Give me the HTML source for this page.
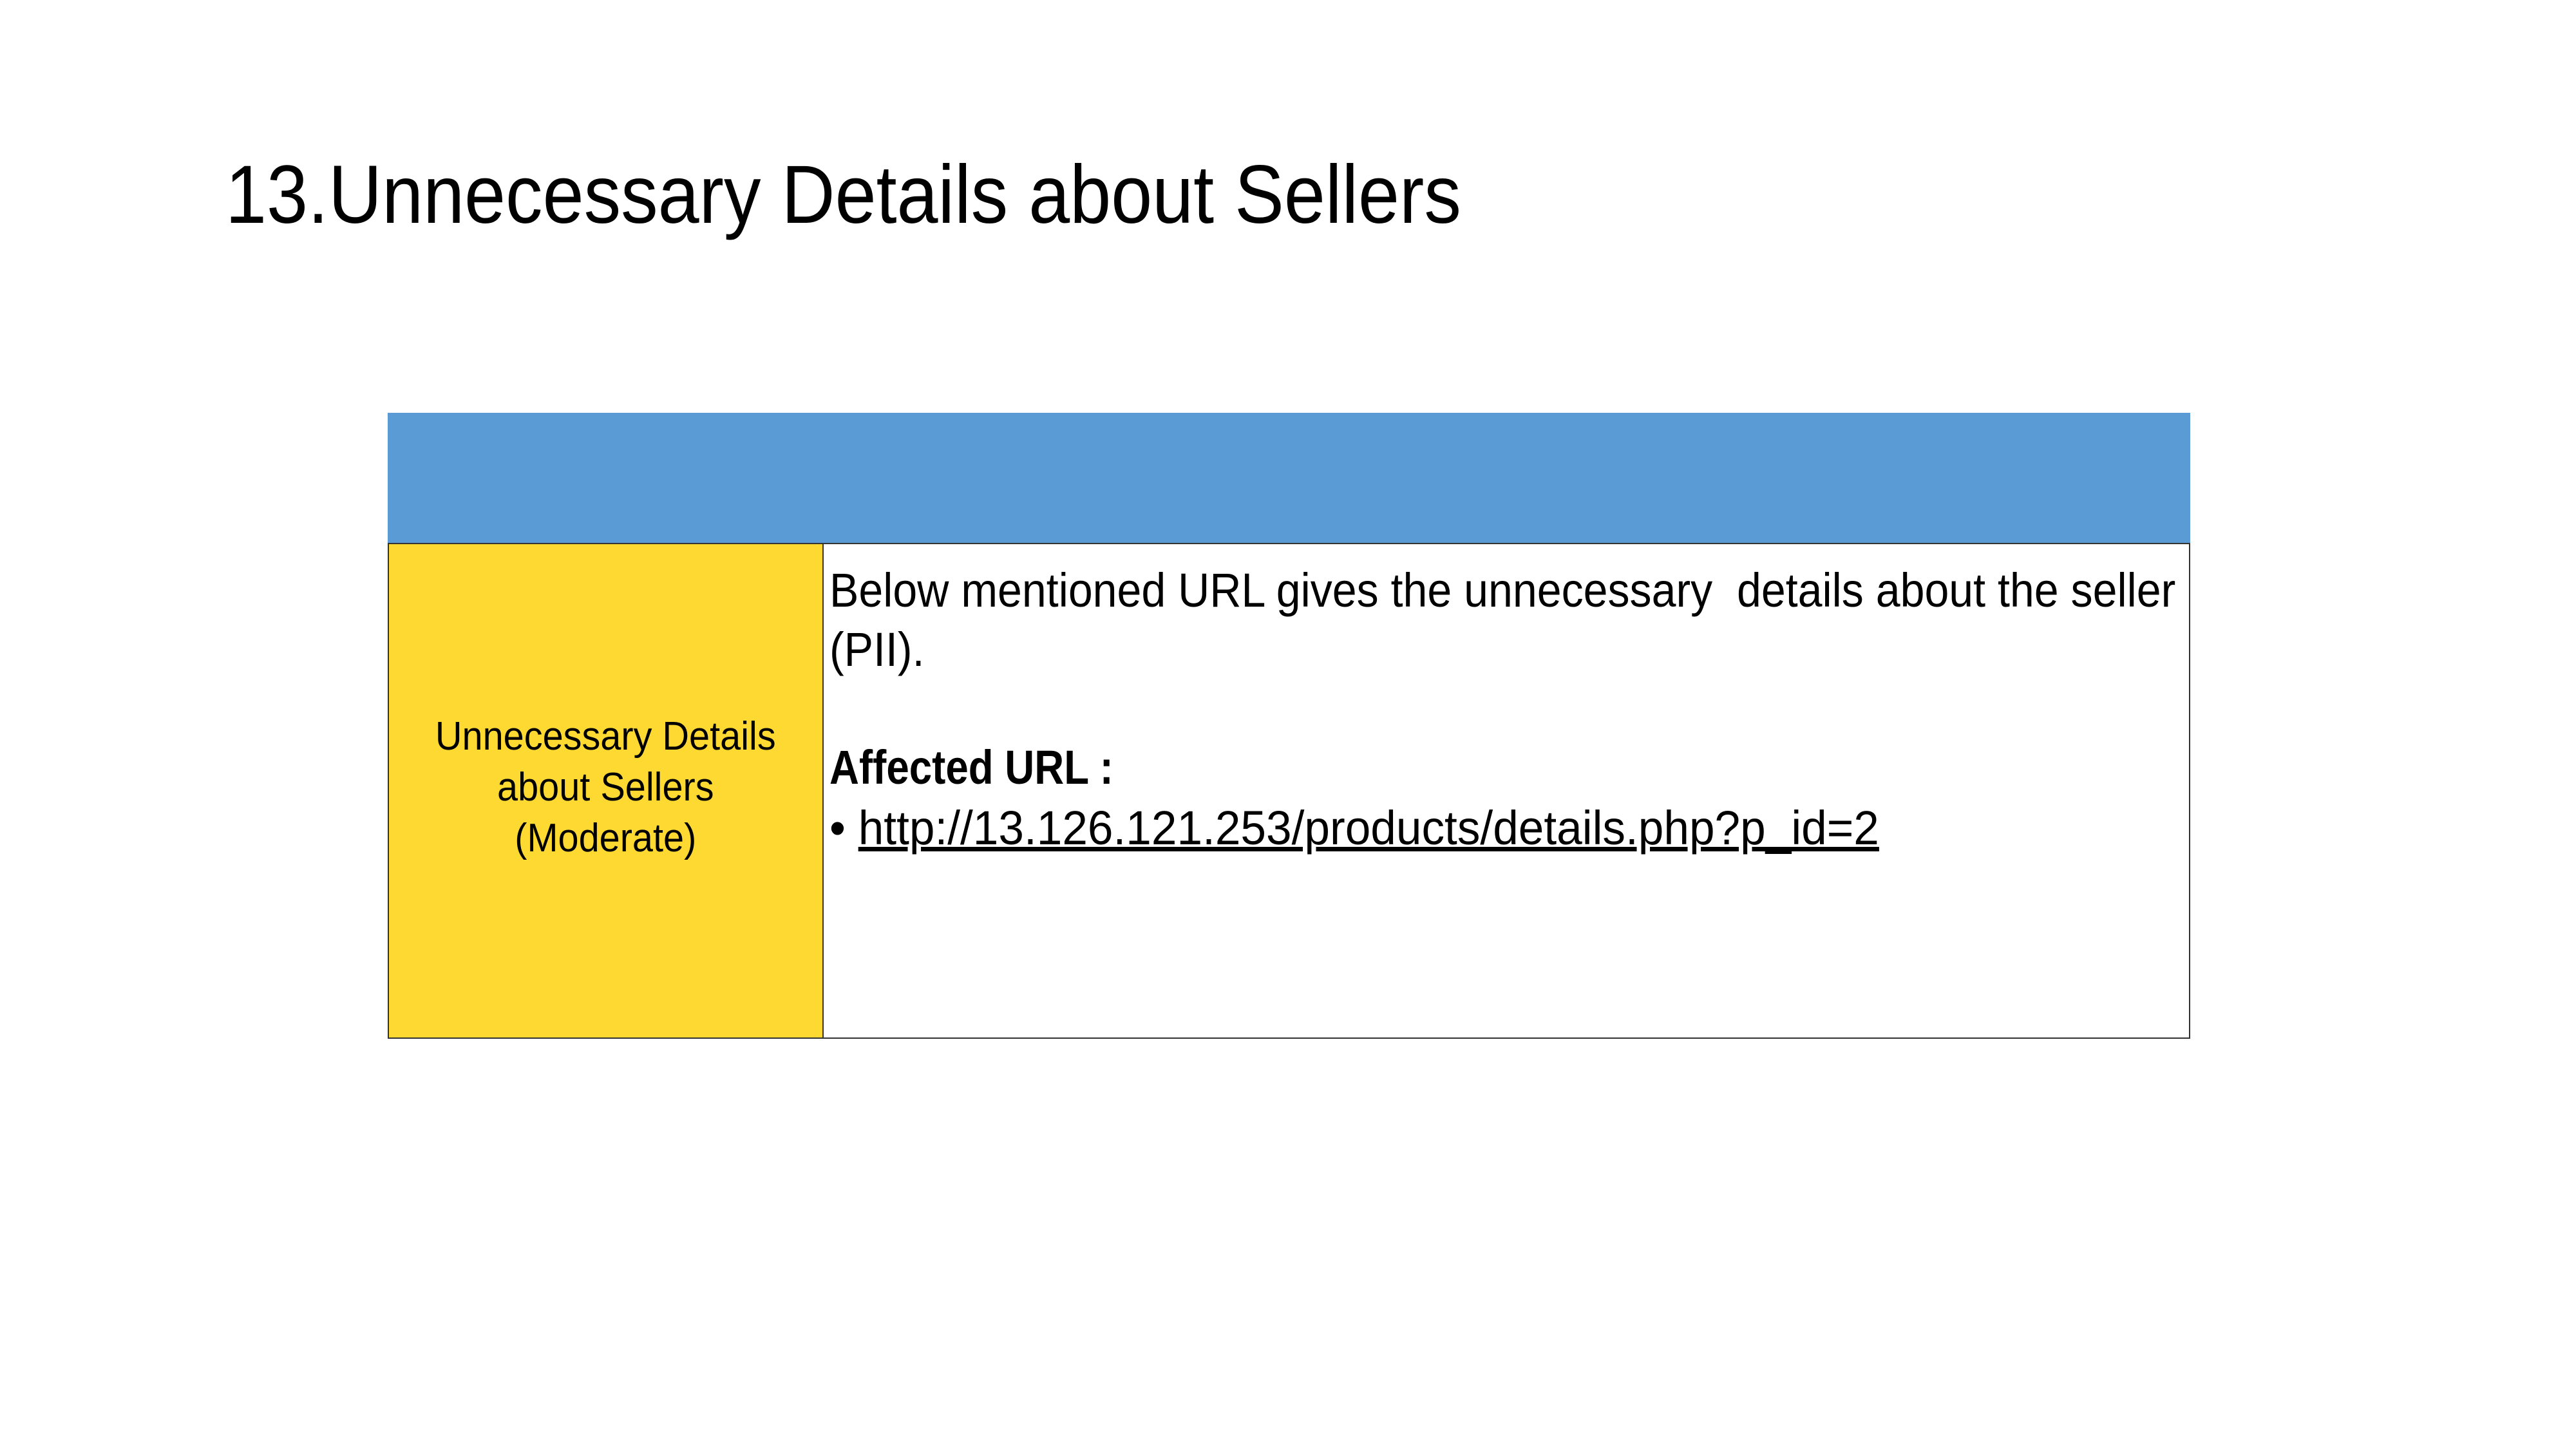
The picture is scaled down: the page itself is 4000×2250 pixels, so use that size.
<!DOCTYPE html>
<html><head><meta charset="utf-8"><style>
html,body{margin:0;padding:0;background:#fff}
body{width:4000px;height:2250px;position:relative;overflow:hidden;font-family:"Liberation Sans",sans-serif;color:#000}
.t{position:absolute;white-space:nowrap;line-height:1;transform-origin:0 0}
</style></head><body>
<div class="t" style="left:350px;top:239px;font-size:128px;transform:scaleX(0.899)">13.Unnecessary Details about Sellers</div>

<div style="position:absolute;left:602px;top:641px;width:2799px;height:203px;background:#5b9bd5"></div>
<div style="position:absolute;left:602px;top:843px;width:677px;height:770px;background:#fed932;border:2px solid #333;box-sizing:border-box"></div>
<div style="position:absolute;left:1277px;top:843px;width:2124px;height:770px;background:#fff;border:2px solid #333;box-sizing:border-box"></div>

<div style="position:absolute;left:602px;width:677px;top:1104px;text-align:center;font-size:62px;line-height:79px">
<div style="display:inline-block;transform:scaleX(0.93)">Unnecessary Details<br>about Sellers<br>(Moderate)</div></div>

<div class="t" style="left:1288px;top:880px;font-size:74px;transform:scaleX(0.92)">Below mentioned URL gives the unnecessary&nbsp; details about the seller</div>
<div class="t" style="left:1288px;top:972px;font-size:74px;transform:scaleX(0.92)">(PII).</div>
<div class="t" style="left:1288px;top:1155px;font-size:74px;font-weight:bold;transform:scaleX(0.86)">Affected URL :</div>
<div class="t" style="left:1288px;top:1249px;font-size:74px;transform:scaleX(0.962)">•&nbsp;<span style="text-decoration:underline">http://13.126.121.253/products/details.php?p_id=2</span></div>
</body></html>
